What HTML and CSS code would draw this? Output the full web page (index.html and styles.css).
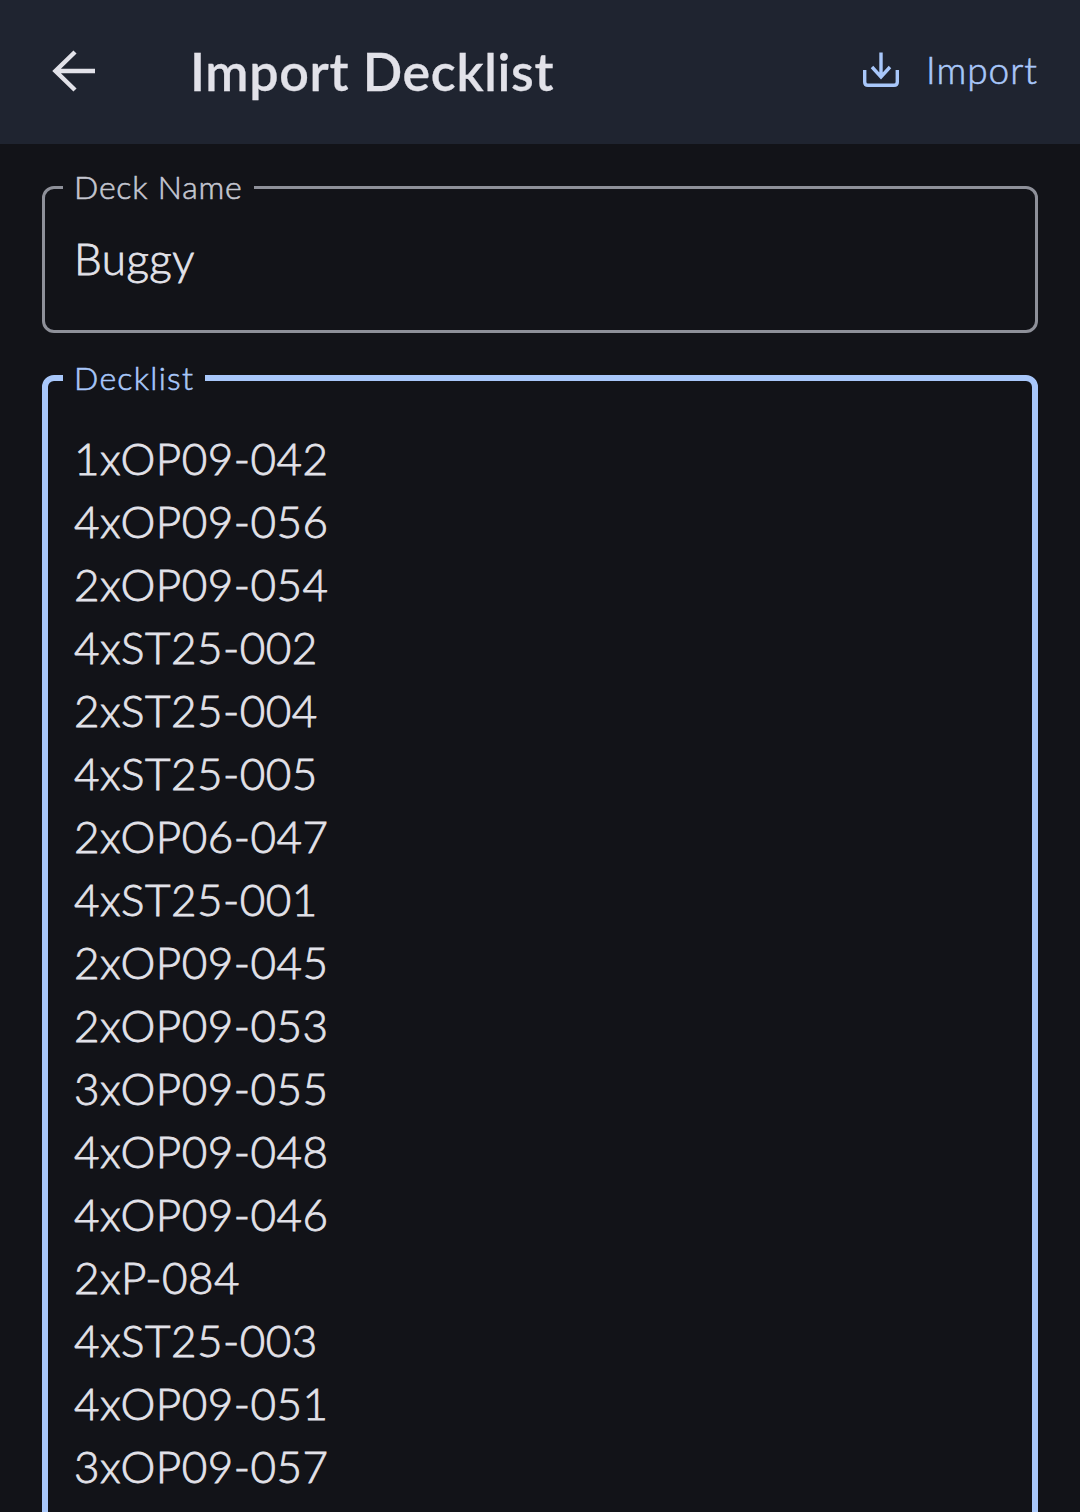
FILE: index.html
```html
<!DOCTYPE html>
<html lang="en">
<head>
    <meta charset="UTF-8">
    <meta name="viewport" content="width=device-width, initial-scale=1.0">
    <title>Import Decklist</title>
    <link rel="stylesheet" href="styles.css">
</head>
<body>
    <div class="screen">
        <header class="top-bar">
            <svg class="back-icon" width="44" height="44" viewBox="0 0 44 44" aria-hidden="true">
                <path d="M43 21H3M23 2L3.500 21L23 40" fill="none" stroke="currentColor" stroke-width="4.500"/>
            </svg>
            <h1 class="title">Import Decklist</h1>
            <div class="import-action">
                <svg class="import-icon" width="38" height="38" viewBox="0 0 38 38" aria-hidden="true">
                    <path d="M19 1.500V26M10 16L19 26L28 16M2.700 19V31Q2.700 34.300 6 34.300H32Q35.300 34.300 35.300 31V19" fill="none" stroke="currentColor" stroke-width="3.400"/>
                </svg>
                <span class="import-label">Import</span>
            </div>
        </header>

        <main class="form">
            <fieldset class="field">
                <legend class="field-label">Deck Name</legend>
                <div class="field-value">Buggy</div>
            </fieldset>

            <fieldset class="field field-focused">
                <legend class="field-label">Decklist</legend>
                <div class="decklist">
                    <div>1xOP09-042</div>
                    <div>4xOP09-056</div>
                    <div>2xOP09-054</div>
                    <div>4xST25-002</div>
                    <div>2xST25-004</div>
                    <div>4xST25-005</div>
                    <div>2xOP06-047</div>
                    <div>4xST25-001</div>
                    <div>2xOP09-045</div>
                    <div>2xOP09-053</div>
                    <div>3xOP09-055</div>
                    <div>4xOP09-048</div>
                    <div>4xOP09-046</div>
                    <div>2xP-084</div>
                    <div>4xST25-003</div>
                    <div>4xOP09-051</div>
                    <div>3xOP09-057</div>
                </div>
            </fieldset>
        </main>
    </div>
</body>
</html>
```

FILE: styles.css
```css
html, body {
    margin: 0;
    background-color: #121318;
}

.screen {
    height: 1512px;
    overflow: hidden;
    font-family: "Lato", "Liberation Sans", sans-serif;
}

.top-bar {
    height: 144px;
    box-sizing: border-box;
    display: flex;
    align-items: center;
    padding: 0 42px 0 52px;
    background-color: #1f2430;
    color: #e2e2e9;
}

.back-icon {
    flex: none;
    margin-right: 94px;
}

.title {
    flex: 1;
    margin: 0 0 2px;
    font-size: 52px;
    font-weight: 600;
    letter-spacing: 0.67px;
    -webkit-text-stroke: 0.3px;
}

.import-action {
    display: flex;
    align-items: center;
    gap: 26px;
    margin-bottom: 4px;
    color: #a8c7fa;
    font-size: 37px;
    font-weight: 300;
    letter-spacing: 1px;
    -webkit-text-stroke: 0.6px;
}

.import-label {
    margin-bottom: 2px;
}

.form {
    display: flex;
    flex-direction: column;
    gap: 25px;
    padding: 23px 42px 0;
}

.field {
    margin: 0;
    padding: 0 29px;
    border: 3px solid #8e9099;
    border-radius: 12px;
    min-width: 0;
}

.field-label {
    margin-left: -11px;
    padding: 0 11px;
    font-size: 32px;
    font-weight: 300;
    line-height: 40px;
    letter-spacing: 0.8px;
    color: #c4c6d0;
    -webkit-text-stroke: 0.6px;
}

.field-value {
    padding: 20px 0 40px;
    font-size: 44px;
    font-weight: 300;
    line-height: 63px;
    letter-spacing: 0.5px;
    color: #e2e2e9;
    -webkit-text-stroke: 0.8px;
}

.field-focused {
    border: 6px solid #a8c7fa;
    padding: 0 26px 100px;
}

.field-focused .field-label {
    color: #a8c7fa;
    letter-spacing: 1.3px;
}

.decklist {
    padding-top: 29px;
    font-size: 44px;
    font-weight: 300;
    line-height: 63px;
    letter-spacing: 0.5px;
    color: #e2e2e9;
    -webkit-text-stroke: 0.8px;
}
```
